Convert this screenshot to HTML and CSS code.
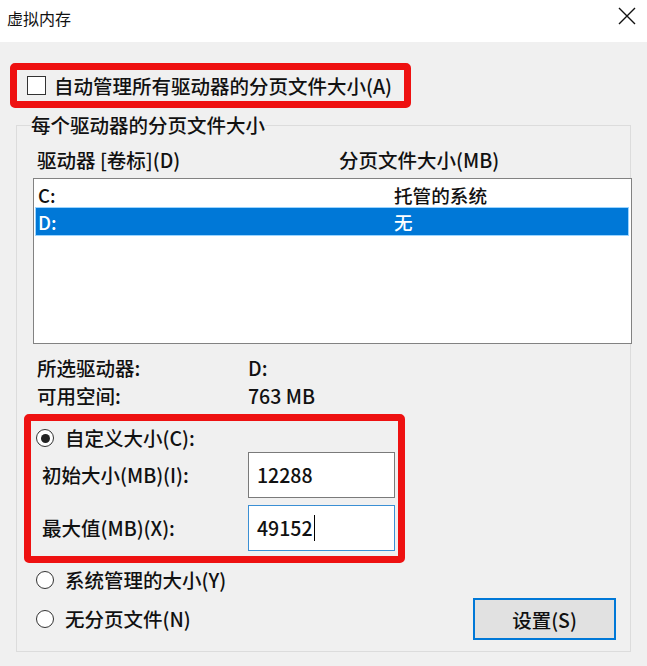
FILE: index.html
```html
<!DOCTYPE html>
<html lang="zh-CN">
<head>
<meta charset="utf-8">
<title>虚拟内存</title>
<link rel="stylesheet" href="styles.css">
</head>
<body>
<div class="window">
  <header class="titlebar">
    <span class="title">虚拟内存</span>
    <svg class="close" width="18" height="18" viewBox="0 0 18 18" aria-label="关闭"><path d="M1 1L17 17M17 1L1 17" stroke="#111" stroke-width="1.4" fill="none"/></svg>
  </header>
  <main class="content">
    <div class="hl hl-auto">
      <span class="checkbox"></span>
      <span>自动管理所有驱动器的分页文件大小(A)</span>
    </div>
    <fieldset class="group">
      <legend>每个驱动器的分页文件大小</legend>
      <div class="cols"><span>驱动器 [卷标](D)</span><span>分页文件大小(MB)</span></div>
      <div class="listbox">
        <div class="row"><span>C:</span><span>托管的系统</span></div>
        <div class="row selected"><span>D:</span><span>无</span></div>
      </div>
      <dl class="info">
        <dt>所选驱动器:</dt><dd>D:</dd>
        <dt>可用空间:</dt><dd>763 MB</dd>
      </dl>
      <div class="hl hl-custom">
        <div class="radio-row"><span class="radio checked"></span><span>自定义大小(C):</span></div>
        <div class="field first"><span class="flabel">初始大小(MB)(I):</span><span class="input">12288</span></div>
        <div class="field"><span class="flabel">最大值(MB)(X):</span><span class="input focus">49152<span class="caret"></span></span></div>
      </div>
      <div class="radio-row r2"><span class="radio"></span><span>系统管理的大小(Y)</span></div>
      <div class="last">
        <div class="radio-row"><span class="radio"></span><span>无分页文件(N)</span></div>
        <button class="btn" type="button">设置(S)</button>
      </div>
    </fieldset>
  </main>
</div>
</body>
</html>
```
FILE: styles.css
```css
html, body {
  margin: 0;
  padding: 0;
}
body {
  width: 647px;
  height: 666px;
  overflow: hidden;
  background: #f0f0f0;
  color: #111;
  font-family: "Noto Sans CJK SC", "Noto Sans", sans-serif;
  font-size: 19.5px;
  font-weight: 500;
}
.titlebar {
  height: 42px;
  background: #fff;
  display: flex;
  justify-content: space-between;
  align-items: flex-start;
  padding: 0 11px 0 7px;
}
.title {
  font-size: 16px;
  font-weight: 400;
  line-height: 20px;
  margin-top: 8px;
}
.close {
  margin-top: 7px;
}
.hl {
  box-sizing: border-box;
  border: 7px solid #ee1111;
  border-radius: 5px;
}
.hl-auto {
  margin: 21px 0 0 10px;
  width: 401px;
  height: 45px;
  display: flex;
  align-items: center;
  gap: 8px;
  padding-left: 10px;
  line-height: 24px;
}
.checkbox {
  box-sizing: border-box;
  width: 19px;
  height: 19px;
  border: 1px solid #333;
  background: #fff;
  flex: none;
}
.group {
  box-sizing: border-box;
  margin: 5px 0 0 16px;
  width: 615px;
  min-width: 0;
  border: 1px solid #dcdcdc;
  padding: 0 0 11px 14px;
}
.group legend {
  padding: 0;
  line-height: 24px;
}
.cols {
  margin-top: 11px;
  display: grid;
  grid-template-columns: 302px auto;
  padding-left: 6px;
  line-height: 24px;
}
.listbox {
  box-sizing: border-box;
  margin: 6px 0 0 2px;
  width: 599px;
  height: 166px;
  border: 1px solid #828282;
  background: #fff;
  padding: 2px 3px 0 2px;
}
.row {
  display: grid;
  grid-template-columns: 356px auto;
  height: 27px;
  line-height: 27px;
  font-size: 18.6px;
  padding-left: 2px;
}
.row.selected {
  background: #0078d7;
  color: #fff;
  box-shadow: 0 0 0 1px #9ad4ff;
}
.info {
  margin: 10px 0 0;
  display: grid;
  grid-template-columns: 211px auto;
  padding-left: 6px;
  line-height: 28px;
}
.info dt, .info dd {
  margin: 0;
}
.hl-custom {
  margin: 4px 0 0 -7px;
  width: 381px;
  height: 149px;
  padding: 4px 0 0 5px;
}
.radio-row {
  display: flex;
  align-items: center;
  gap: 11px;
  height: 26px;
  line-height: 26px;
}
.radio {
  box-sizing: border-box;
  width: 18px;
  height: 18px;
  border: 1.5px solid #333;
  border-radius: 50%;
  background: #fff;
  flex: none;
  display: flex;
  align-items: center;
  justify-content: center;
}
.radio.checked::after {
  content: "";
  width: 9px;
  height: 9px;
  border-radius: 50%;
  background: #222;
}
.field {
  display: flex;
  align-items: center;
  margin-top: 7px;
  padding-left: 6px;
}
.field.first {
  margin-top: 1px;
}
.flabel {
  width: 206px;
  flex: none;
  line-height: 26px;
}
.input {
  box-sizing: border-box;
  width: 147px;
  height: 46px;
  border: 1px solid #7a7a7a;
  background: #fff;
  padding-left: 8px;
  line-height: 44px;
  display: flex;
  align-items: center;
}
.input.focus {
  border-color: #3a8fd4;
}
.caret {
  display: inline-block;
  width: 1px;
  height: 26px;
  background: #000;
  margin-left: 1px;
}
.r2 {
  margin-top: 4px;
  padding-left: 5px;
}
.last {
  display: flex;
  justify-content: space-between;
  align-items: center;
  margin-top: 5px;
  padding-left: 5px;
}
.btn {
  box-sizing: border-box;
  width: 143px;
  height: 42px;
  margin-right: 14px;
  background: #e1e1e1;
  border: 2px solid #0078d7;
  font: inherit;
  color: #111;
  padding: 0;
}
```
